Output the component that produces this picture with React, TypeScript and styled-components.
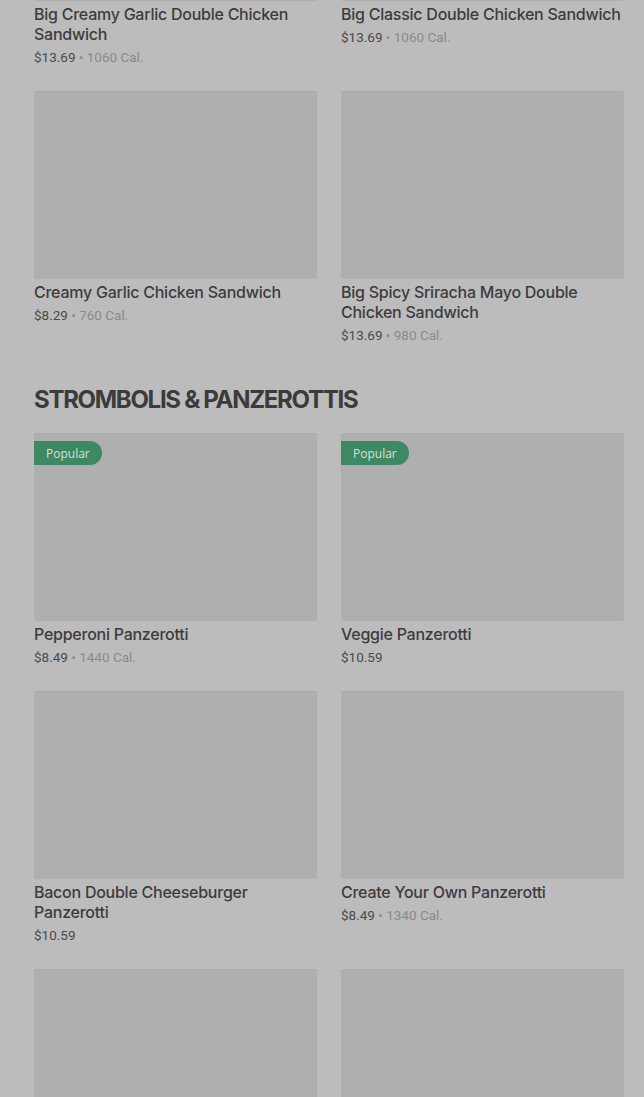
import React from 'react';
import styled, { createGlobalStyle } from 'styled-components';

interface MenuItem {
  name: string;
  price: string;
  cal?: string;
  popular?: boolean;
}

interface Section {
  title?: string;
  items: MenuItem[];
}

const GlobalStyle = createGlobalStyle`
  html, body {
    margin: 0;
    padding: 0;
    background: #bcbcbc;
    overflow: hidden;
  }
  body {
    font-family: Inter, "Liberation Sans", Arial, sans-serif;
  }
`;

const Page = styled.div`
  height: 1097px;
  overflow: hidden;
  background: #bcbcbc;
`;

// the menu is scrolled: the first row's image sits above the viewport
const Scroller = styled.div`
  margin-top: -187px;
  padding: 0 20px 0 34px;
`;

const SectionBlock = styled.section`
  display: flex;
  flex-direction: column;
`;

const SectionTitle = styled.h2`
  margin: 41px 0 18px;
  font-family: Inter, "Liberation Sans", sans-serif;
  font-weight: 700;
  font-size: 24px;
  line-height: 30px;
  letter-spacing: -1.3px;
  color: #3b3b3b;
  text-transform: uppercase;
`;

const Grid = styled.div`
  display: grid;
  grid-template-columns: 1fr 1fr;
  column-gap: 24px;
  row-gap: 25px;
`;

const Card = styled.div`
  display: flex;
  flex-direction: column;
`;

const Thumb = styled.div`
  position: relative;
  height: 187px;
  background: #afafaf;
  border-top: 1px solid #aaaaaa;
  border-radius: 2px;
`;

const Badge = styled.span`
  position: absolute;
  left: 0;
  top: 7px;
  height: 24px;
  padding: 0 12px;
  display: flex;
  align-items: center;
  background: #3e8863;
  color: #d6e0da;
  font-family: "Open Sans", "Liberation Sans", sans-serif;
  font-size: 12px;
  border-radius: 0 12px 12px 0;
`;

const Name = styled.div`
  margin-top: 3px;
  font-size: 16px;
  font-weight: 500;
  line-height: 20px;
  letter-spacing: -0.25px;
  color: #3c3c3c;
`;

const Meta = styled.div`
  margin-top: 4px;
  font-family: Roboto, "Liberation Sans", sans-serif;
  font-size: 13.5px;
  line-height: 18px;
  color: #4a4a4a;
`;

const Cal = styled.span`
  color: #8a8a8a;
`;

const sections: Section[] = [
  {
    items: [
      { name: 'Big Creamy Garlic Double Chicken Sandwich', price: '$13.69', cal: '1060 Cal.' },
      { name: 'Big Classic Double Chicken Sandwich', price: '$13.69', cal: '1060 Cal.' },
      { name: 'Creamy Garlic Chicken Sandwich', price: '$8.29', cal: '760 Cal.' },
      { name: 'Big Spicy Sriracha Mayo Double Chicken Sandwich', price: '$13.69', cal: '980 Cal.' },
    ],
  },
  {
    title: 'Strombolis & Panzerottis',
    items: [
      { name: 'Pepperoni Panzerotti', price: '$8.49', cal: '1440 Cal.', popular: true },
      { name: 'Veggie Panzerotti', price: '$10.59', popular: true },
      { name: 'Bacon Double Cheeseburger Panzerotti', price: '$10.59' },
      { name: 'Create Your Own Panzerotti', price: '$8.49', cal: '1340 Cal.' },
      { name: '', price: '' },
      { name: '', price: '' },
    ],
  },
];

const ItemCard: React.FC<{ item: MenuItem }> = ({ item }) => (
  <Card>
    <Thumb>{item.popular && <Badge>Popular</Badge>}</Thumb>
    {item.name && <Name>{item.name}</Name>}
    {item.price && (
      <Meta>
        {item.price}
        {item.cal && <Cal> • {item.cal}</Cal>}
      </Meta>
    )}
  </Card>
);

const App: React.FC = () => (
  <Page>
    <GlobalStyle />
    <Scroller>
      {sections.map((s, i) => (
        <SectionBlock key={i}>
          {s.title && <SectionTitle>{s.title}</SectionTitle>}
          <Grid>
            {s.items.map((it, j) => (
              <ItemCard key={j} item={it} />
            ))}
          </Grid>
        </SectionBlock>
      ))}
    </Scroller>
  </Page>
);

export default App;
